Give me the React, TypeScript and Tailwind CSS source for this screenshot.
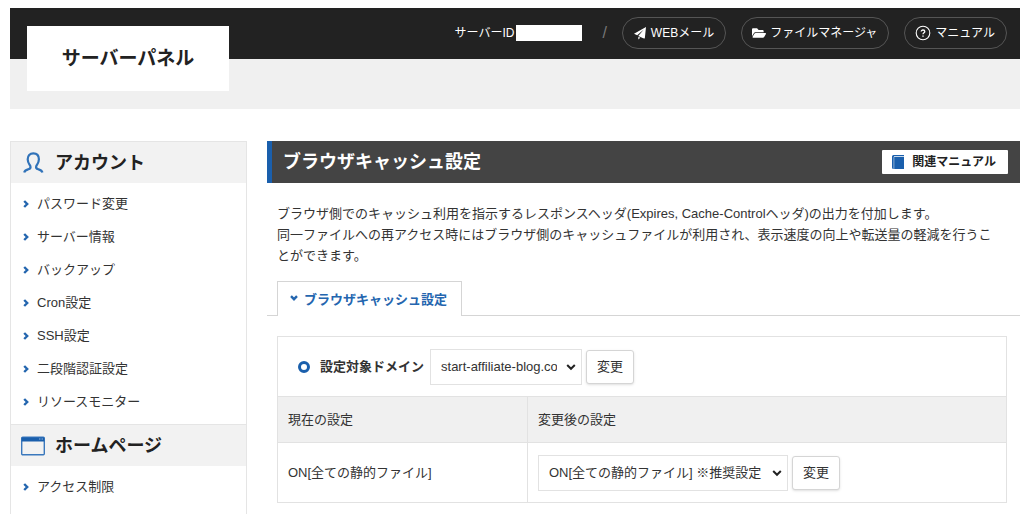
import React, { useState } from 'react';
import { FaFolderOpen } from 'react-icons/fa';

const AccountIcon = () => (
    <svg className="h-6 w-6" viewBox="0 0 24 24" fill="none" stroke="#3173b9" strokeWidth="2.200" strokeLinejoin="round" aria-hidden="true">
        <path d="M3.200 21.600C3.700 19.300 5.500 18.900 7.400 18.300c1.600-.5 2.500-1.400 2-3.100C8.900 13.500 6.700 12.300 6.700 8.300 6.700 4.700 8.800 2.300 12.300 2.300s5.600 2.400 5.600 6c0 4-2.200 5.200-2.700 6.900-.5 1.700.4 2.600 2 3.100 1.900.6 3.700 1 4.200 3.300" />
    </svg>
);

const WindowIcon = () => (
    <svg className="h-5 w-6" viewBox="0 0 24 20" aria-hidden="true">
        <rect x="0.700" y="1.200" width="22.600" height="17.600" rx="1" fill="#f2f2f2" stroke="#3a78bd" strokeWidth="1.400" />
        <path d="M0.700 1.500h22.600V5.500H.7z" fill="#1a5fac" />
        <path d="M18 3h4" stroke="#8fb3dc" strokeWidth="1" strokeDasharray="1 0.500" />
    </svg>
);

const BookIcon = () => (
    <svg className="h-[14px] w-3" viewBox="0 0 12 14" aria-hidden="true">
        <path d="M1.500 0H12v1H2v.8h10V14H1.500Q0 14 0 12.500v-11Q0 0 1.500 0z" fill="#1a5fac" />
        <path d="M1.900 1.800V14" stroke="#b9cfe8" strokeWidth="0.700" />
    </svg>
);

const PlaneIcon = () => (
    <svg className="h-[14px] w-[14px]" viewBox="0 0 14 14" fill="currentColor" aria-hidden="true">
        <path d="M13 1L1 7.700l3.200 1.500L10.800 3.600 5.300 10l4.900 2.200L11.800 12.400z" />
        <path d="M5.300 10.800V13.600L7.300 11.700z" />
    </svg>
);

const HelpIcon = () => (
    <svg className="h-4 w-4" viewBox="0 0 16 16" fill="none" stroke="currentColor" aria-hidden="true">
        <circle cx="8" cy="8" r="6.800" strokeWidth="1.100" />
        <path d="M6.200 6.600C6.200 5.500 7 5 8 5s1.800.6 1.800 1.500C9.800 7.700 8 7.900 8 9.300" strokeWidth="1.300" />
        <path d="M8 10.400v1.400" strokeWidth="1.400" />
    </svg>
);

const ArrowIcon = ({ className }: { className?: string }) => (
    <svg className={className} viewBox="0 0 8 8" fill="none" stroke="#2466af" strokeWidth="2.400" aria-hidden="true">
        <path d="M1.200 1L4.200 4 1.200 7" />
    </svg>
);

const sections = [
    {
        title: 'アカウント',
        icon: <AccountIcon />,
        items: ['パスワード変更', 'サーバー情報', 'バックアップ', 'Cron設定', 'SSH設定', '二段階認証設定', 'リソースモニター'],
    },
    {
        title: 'ホームページ',
        icon: <WindowIcon />,
        items: ['アクセス制限'],
    },
];

const links = [
    { label: 'WEBメール', icon: <PlaneIcon /> },
    { label: 'ファイルマネージャ', icon: <FaFolderOpen className="h-[14px] w-[14px]" /> },
    { label: 'マニュアル', icon: <HelpIcon /> },
];

const Header = () => (
    <header className="bg-[#f0f0f0] pb-[50px]">
        <div className="flex h-[51px] items-start justify-between bg-[#222] pl-[17px] pr-[13px]">
            <h1 className="mt-[18px] flex h-[65px] w-[202px] shrink-0 items-center justify-center bg-white text-[19px] font-bold text-[#222]">
                サーバーパネル
            </h1>
            <nav className="mt-[9px] flex h-8 items-center gap-[15px] text-xs text-white">
                <div className="flex items-center">
                    <span>サーバーID</span>
                    <span className="ml-[2px] h-4 w-[66px] bg-white" />
                    <span className="ml-5 text-base text-[#777]">/</span>
                </div>
                {links.map((link) => (
                    <a key={link.label} href="#" className="flex h-8 items-center gap-1 whitespace-nowrap rounded-full border border-[#555] pl-[10px] pr-[11px]">
                        {link.icon}
                        {link.label}
                    </a>
                ))}
            </nav>
        </div>
    </header>
);

const Sidebar = () => (
    <aside className="w-[237px] shrink-0 border-x border-[#e5e5e5]">
        {sections.map((section) => (
            <section key={section.title}>
                <h2 className="flex h-[42px] items-center gap-[10px] border-t border-[#e5e5e5] bg-[#f2f2f2] pl-[10px] text-lg font-bold text-[#222]">
                    {section.icon}
                    {section.title}
                </h2>
                <ul className="pb-[6px] pt-1">
                    {section.items.map((item) => (
                        <li key={item}>
                            <a href="#" className="flex h-[33px] items-center gap-[6px] pl-3">
                                <ArrowIcon className="h-2 w-2" />
                                {item}
                            </a>
                        </li>
                    ))}
                </ul>
            </section>
        ))}
    </aside>
);

const SelectBox = ({ className, ...props }: React.ComponentProps<'select'>) => (
    <div className="relative">
        <select
            {...props}
            className={`h-9 appearance-none border border-[#e2e2e2] bg-white pl-[10px] pr-6 ${className}`}
        />
        <svg className="pointer-events-none absolute right-[6px] top-[13px] h-[10px] w-[10px]" viewBox="0 0 10 10" fill="none" stroke="#222" strokeWidth="2" aria-hidden="true">
            <path d="M1.200 3L5 6.800 8.800 3" />
        </svg>
    </div>
);

const ChangeButton = () => (
    <button type="submit" className="h-[34px] w-12 rounded-[3px] border border-[#d5d5d5] bg-white shadow">
        変更
    </button>
);

export default function App() {
    const [domain, setDomain] = useState('start-affiliate-blog.com');
    const [cache, setCache] = useState('all');

    return (
        <div className="flex min-h-screen flex-col bg-white pl-[10px] pr-1 pt-2 font-['Liberation_Sans','Noto_Sans_CJK_JP',sans-serif] text-[13px] leading-[21px] text-[#333]">
            <Header />
            <div className="mt-8 flex grow gap-5">
                <Sidebar />
                <main className="min-w-0 grow">
                    <div className="flex h-[42px] items-center justify-between border-l-[5px] border-[#1a5fac] bg-[#444] pl-[11px] pr-3">
                        <h2 className="text-lg font-bold text-white">ブラウザキャッシュ設定</h2>
                        <a href="#" className="flex h-6 items-center gap-2 rounded-[1px] bg-white pl-[10px] pr-3 text-xs font-bold text-[#222]">
                            <BookIcon />
                            関連マニュアル
                        </a>
                    </div>
                    <p className="mt-5 pl-[10px] pr-4">
                        ブラウザ側でのキャッシュ利用を指示するレスポンスヘッダ(Expires, Cache-Controlヘッダ)の出力を付加します。
                        <br />
                        同一ファイルへの再アクセス時にはブラウザ側のキャッシュファイルが利用され、表示速度の向上や転送量の軽減を行うことができます。
                    </p>
                    <div className="mt-[15px] flex border-b border-[#d5d5d5] pl-[10px]">
                        <button type="button" className="-mb-px flex h-[35px] items-center gap-[6px] border border-b-0 border-[#d5d5d5] bg-white pl-3 pr-[14px] font-bold text-[#2466af]">
                            <ArrowIcon className="h-2 w-2 rotate-90" />
                            ブラウザキャッシュ設定
                        </button>
                    </div>
                    <div className="pl-[10px] pr-[13px] pt-5">
                        <table className="w-full table-fixed border-collapse border border-[#e2e2e2] text-left">
                            <colgroup>
                                <col className="w-[250px]" />
                                <col />
                            </colgroup>
                            <tbody>
                                <tr className="h-[60px]">
                                    <td colSpan={2} className="px-5">
                                        <div className="flex items-center gap-1">
                                            <span className="mr-1 h-3 w-3 rounded-full border-[3px] border-[#1a5fac]" />
                                            <label htmlFor="domain" className="px-[2px] font-bold">設定対象ドメイン</label>
                                            <SelectBox id="domain" value={domain} onChange={(e) => setDomain(e.target.value)} className="w-[152px]">
                                                <option value="start-affiliate-blog.com">start-affiliate-blog.com</option>
                                            </SelectBox>
                                            <ChangeButton />
                                        </div>
                                    </td>
                                </tr>
                                <tr className="h-[46px] border-y border-[#e2e2e2] bg-[#f0f0f0]">
                                    <th className="border-r border-[#e2e2e2] px-[10px] font-normal">現在の設定</th>
                                    <th className="px-[10px] font-normal">変更後の設定</th>
                                </tr>
                                <tr className="h-[60px]">
                                    <td className="border-r border-[#e2e2e2] px-[10px]">ON[全ての静的ファイル]</td>
                                    <td className="px-[10px]">
                                        <div className="flex items-center gap-1">
                                            <SelectBox aria-label="変更後の設定" value={cache} onChange={(e) => setCache(e.target.value)} className="w-[250px]">
                                                <option value="all">ON[全ての静的ファイル] ※推奨設定</option>
                                            </SelectBox>
                                            <ChangeButton />
                                        </div>
                                    </td>
                                </tr>
                            </tbody>
                        </table>
                    </div>
                </main>
            </div>
        </div>
    );
}
